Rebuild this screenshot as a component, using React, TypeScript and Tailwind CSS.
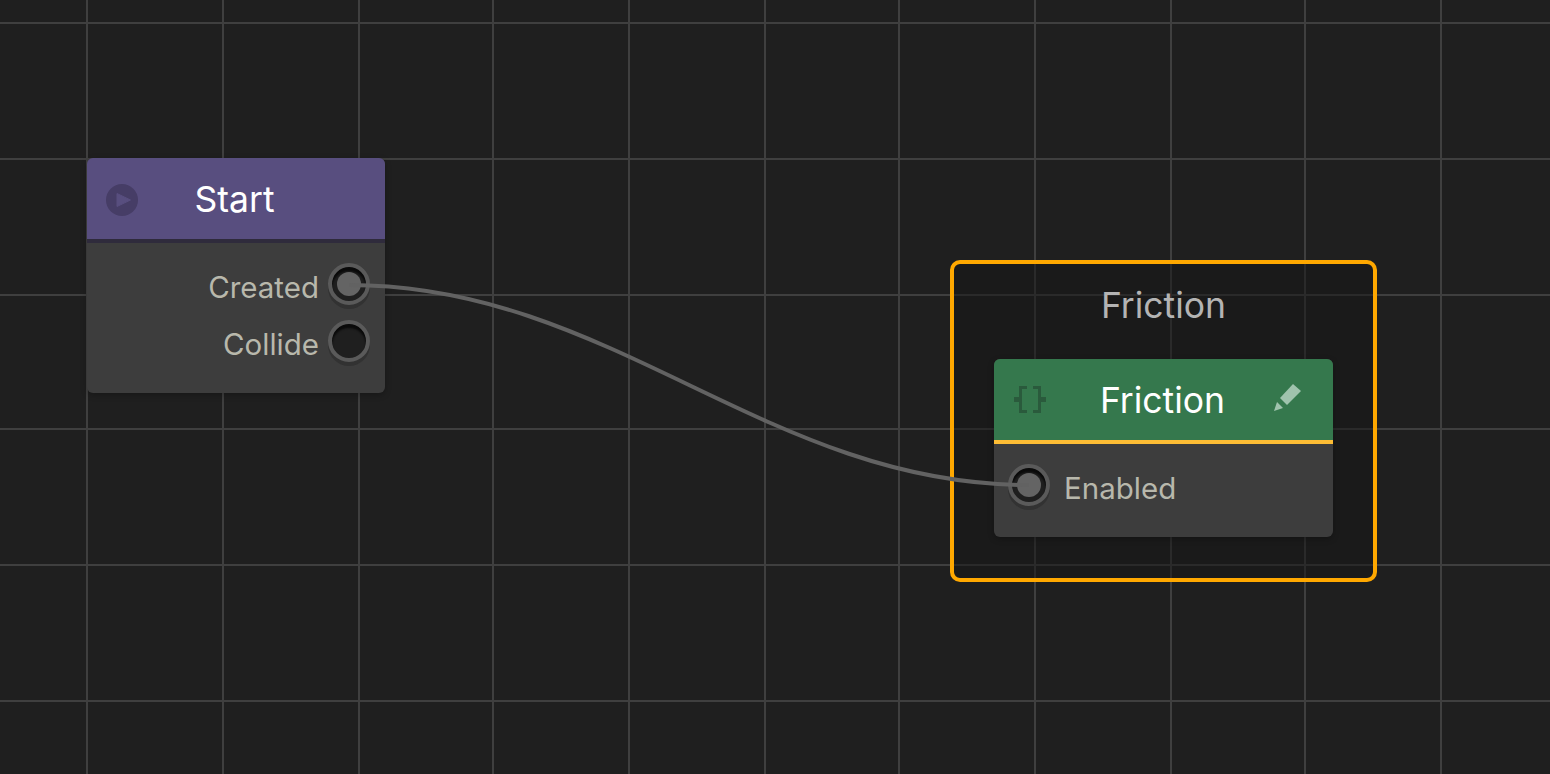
const gridXs = [86, 222, 358, 492, 628, 764, 898, 1034, 1170, 1304, 1440];
const gridYs = [22, 158, 294, 428, 564, 700];

function Port({ connected }: { connected?: boolean }) {
  return (
    <div className="flex h-[42px] w-[42px] shrink-0 items-center justify-center rounded-full border-[4px] border-[#5a5a5a] bg-[#1f1f1f] shadow-[0_4px_0_#323232,inset_0_4px_2px_#0a0a0a]">
      {connected && <div className="h-[24px] w-[24px] rounded-full bg-[#646464]" />}
    </div>
  );
}

function PlayIcon() {
  return (
    <svg width="32" height="32" viewBox="0 0 32 32" className="shrink-0">
      <circle cx="16" cy="16" r="16" fill="#463d66" />
      <path d="M11 9.5 L24.5 16 L11 22.5 Z" fill="#584e7f" stroke="#584e7f" strokeWidth="1" strokeLinejoin="round" />
    </svg>
  );
}

function BracesIcon() {
  return (
    <svg width="32" height="27" viewBox="0 0 32 27" fill="#2a5a3c" className="-mt-[2px] shrink-0">
      <path d="M5 0h8v3H8v21h5v3H5V16H0v-5h5z" />
      <path d="M27 0h-8v3h5v21h-5v3h8V16h5v-5h-5z" />
    </svg>
  );
}

function PencilIcon() {
  return (
    <svg width="27" height="27" viewBox="0 0 27 27" fill="#9fc3ad" className="-mt-[6px] shrink-0">
      <path d="M6 14 L19 0 L27 7 L13 21 Z" />
      <path d="M3 18 L9 24 L0 27 Z" />
    </svg>
  );
}

export default function App() {
  return (
    <div className="relative h-[774px] w-full overflow-hidden bg-[#1f1f1f] font-['Inter',sans-serif]">
      {/* grille du canvas */}
      <svg className="absolute inset-0" width="1550" height="774">
        {gridXs.map((x) => (
          <rect key={x} x={x} y="0" width="2" height="774" fill="#3f3f3f" />
        ))}
        {gridYs.map((y) => (
          <rect key={y} x="0" y={y} width="1550" height="2" fill="#3f3f3f" />
        ))}
      </svg>

      {/* Start */}
      <div className="absolute left-[87px] top-[158px] flex h-[235px] w-[298px] flex-col overflow-hidden rounded-[6px] bg-[#3d3d3d] shadow-[0_2px_6px_rgba(0,0,0,0.25)]">
        <div className="relative flex h-[85px] shrink-0 items-center justify-center border-b-[4px] border-[#2f2b3c] bg-[#584e7f] pr-[3px] pt-[2px]">
          <div className="absolute left-[19px] top-[26px]">
            <PlayIcon />
          </div>
          <span className="text-[35.5px] leading-none text-white">Start</span>
        </div>
        <div className="flex flex-col gap-[15px] pr-[15px] pt-[20px]">
          <div className="flex items-center justify-end gap-[9px]">
            <span className="mt-[7px] text-[29.5px] leading-none text-[#b8b8ac]">Created</span>
            <Port connected />
          </div>
          <div className="flex items-center justify-end gap-[9px]">
            <span className="mt-[7px] text-[29.5px] leading-none text-[#b8b8ac]">Collide</span>
            <Port />
          </div>
        </div>
      </div>

      {/* Groupe Friction */}
      <div className="absolute left-[950px] top-[260px] flex h-[322px] w-[427px] flex-col items-center rounded-[10px] border-[4px] border-[#ffa800] bg-[#151515]/50 pt-[21px]">
        <span className="text-[35.5px] leading-[42px] text-[#b4b4b4]">Friction</span>
        <div className="mt-[32px] flex h-[178px] w-[339px] flex-col overflow-hidden rounded-[6px] bg-[#3d3d3d] shadow-[0_2px_6px_rgba(0,0,0,0.25)]">
          <div className="grid h-[85px] shrink-0 grid-cols-[1fr_auto_1fr] items-center border-b-[4px] border-[#fdbd35] bg-[#35784d] pl-[20px] pr-[32px] pt-[2px]">
            <BracesIcon />
            <span className="ml-[10px] text-[35.5px] leading-none text-white">Friction</span>
            <div className="flex justify-end">
              <PencilIcon />
            </div>
          </div>
          <div className="flex items-center gap-[14px] pl-[14px] pt-[20px]">
            <Port connected />
            <span className="mt-[7px] text-[29.5px] leading-none text-[#b8b8ac]">Enabled</span>
          </div>
        </div>
      </div>

      {/* lien entre les deux ports */}
      <svg className="pointer-events-none absolute inset-0" width="1550" height="774" fill="none">
        <path d="M349 285 C 612 285, 766 485, 1029 485" stroke="#626262" strokeWidth="4" />
      </svg>
    </div>
  );
}
